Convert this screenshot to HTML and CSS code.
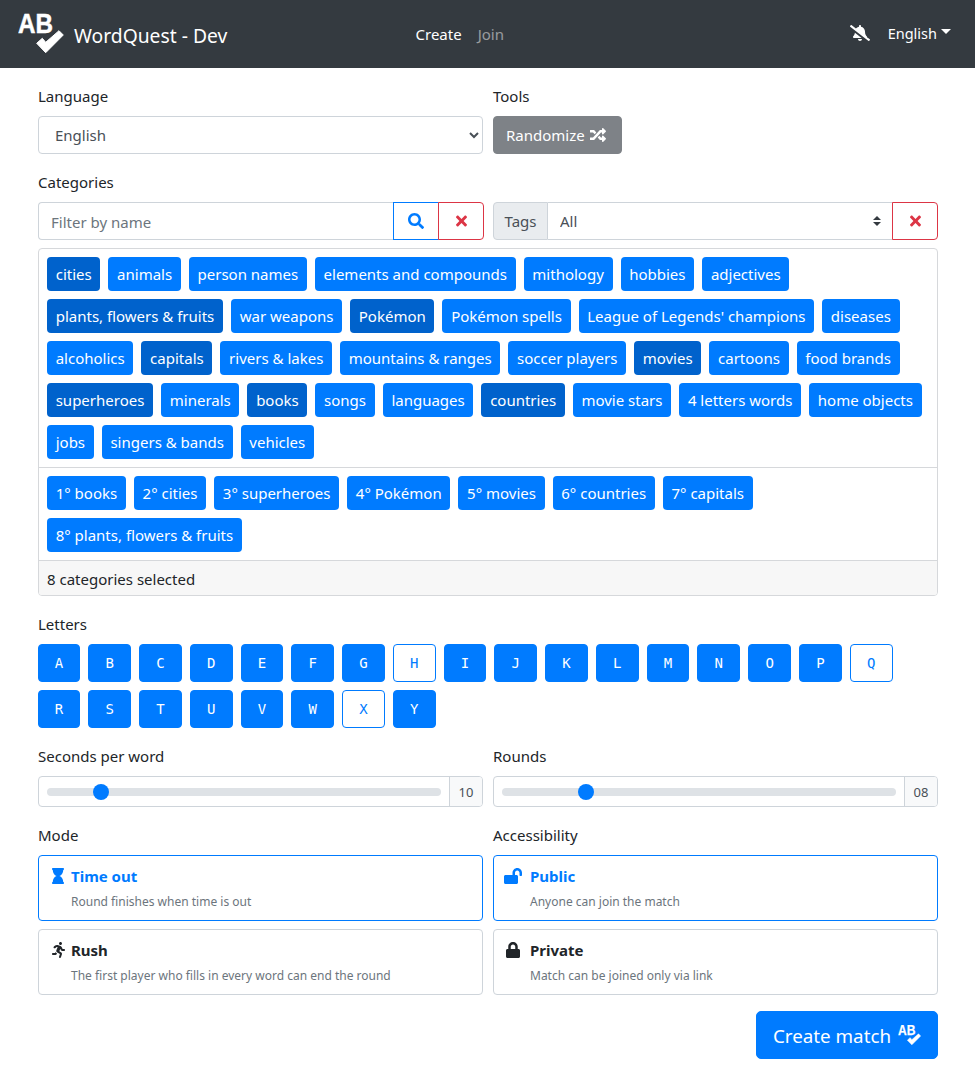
FILE: index.html
```html
<!DOCTYPE html>
<html lang="en">
<head>
<meta charset="utf-8">
<title>WordQuest - Dev</title>
<link rel="stylesheet" href="styles.css">
</head>
<body>
<nav class="navbar">
  <a class="brand">
    <svg class="logo" viewBox="0 -10 46 62" width="46" height="62"><text x="0" y="20" class="logo-text" textLength="35" lengthAdjust="spacingAndGlyphs">AB</text><path d="M18.7 30.3l5.6-5 3.4 4L41 17.7l4.3 4.3-17.6 17.7z" fill="#fff" stroke="#fff" stroke-linejoin="round"/></svg>
    <span class="brand-name">WordQuest - Dev</span>
  </a>
  <div class="nav-center"><a class="nav-link active">Create</a><a class="nav-link muted">Join</a></div>
  <div class="nav-right">
    <svg class="bell" viewBox="0 0 640 512" width="20" height="16"><path fill="#fff" d="M633.82 458.1l-90.62-70.05c.19-1.38.8-2.66.8-4.06.05-7.55-2.61-15.27-8.61-21.71-19.32-20.76-55.47-51.99-55.47-154.29 0-77.7-54.48-139.9-127.94-155.16V32c0-17.67-14.32-32-31.98-32s-31.98 14.33-31.98 32v20.84c-40.33 8.38-74.66 31.07-97.59 62.57L45.47 3.37C38.49-2.05 28.43-.8 23.01 6.18L3.37 31.45C-2.05 38.42-.8 48.47 6.18 53.9l588.35 454.73c6.98 5.43 17.03 4.17 22.46-2.81l19.64-25.27c5.42-6.97 4.17-17.02-2.81-22.45zM157.23 251.54c-8.61 67.96-36.41 93.33-52.62 110.75-6 6.45-8.66 14.16-8.61 21.71.11 16.4 12.98 32 32.1 32h241.92L157.23 251.54zM320 512c35.32 0 63.97-28.65 63.97-64H256.03c0 35.35 28.65 64 63.97 64z"/></svg>
    <span class="lang">English<i class="caret"></i></span>
  </div>
</nav>
<main class="container">
  <div class="two">
    <div class="field">
      <label class="label">Language</label>
      <select class="lang-select"><option>English</option></select>
    </div>
    <div class="field">
      <label class="label">Tools</label>
      <div><button class="btn-random">Randomize <svg viewBox="0 0 512 512" width="16" height="16"><path fill="#fff" d="M504.971 359.029c9.373 9.373 9.373 24.569 0 33.941l-80 79.984c-15.01 15.01-40.971 4.49-40.971-16.971V416h-58.785a12.004 12.004 0 0 1-8.773-3.812l-70.556-75.596 53.333-57.143L352 336h32v-39.981c0-21.438 25.943-31.998 40.971-16.971l80 79.981zM12 176h84l52.781 56.551 53.333-57.143-70.556-75.596A11.999 11.999 0 0 0 122.785 96H12c-6.627 0-12 5.373-12 12v56c0 6.627 5.373 12 12 12zm372 0v39.984c0 21.46 25.961 31.98 40.971 16.971l80-79.984c9.373-9.373 9.373-24.569 0-33.941l-80-79.981C409.943 24.021 384 34.582 384 56.019V96h-58.785a12.004 12.004 0 0 0-8.773 3.812L96 336H12c-6.627 0-12 5.373-12 12v56c0 6.627 5.373 12 12 12h110.785c3.326 0 6.503-1.381 8.773-3.812L352 176h32z"/></svg></button></div>
    </div>
  </div>

  <label class="label cat-label">Categories</label>
  <div class="two">
    <div class="group group-filter">
      <input class="filter" placeholder="Filter by name">
      <button class="icon-btn blue"><svg viewBox="0 0 512 512" width="16" height="16"><path fill="#007bff" d="M505 442.7L405.3 343c-4.5-4.5-10.6-7-17-7H372c27.6-35.3 44-79.7 44-128C416 93.1 322.9 0 208 0S0 93.1 0 208s93.1 208 208 208c48.3 0 92.7-16.4 128-44v16.3c0 6.4 2.5 12.5 7 17l99.7 99.7c9.4 9.4 24.6 9.4 33.9 0l28.3-28.3c9.4-9.4 9.4-24.6.1-34zM208 336c-70.7 0-128-57.2-128-128 0-70.7 57.2-128 128-128 70.7 0 128 57.2 128 128 0 70.7-57.2 128-128 128z"/></svg></button>
      <button class="icon-btn red end"><svg viewBox="0 0 352 512" width="11" height="16"><path fill="#dc3545" d="M242.72 256l100.07-100.07c12.28-12.28 12.28-32.19 0-44.48l-22.24-22.24c-12.28-12.28-32.19-12.28-44.48 0L176 189.28 75.93 89.21c-12.28-12.28-32.19-12.28-44.48 0L9.21 111.45c-12.28 12.28-12.28 32.19 0 44.48L109.28 256 9.21 356.07c-12.28 12.28-12.28 32.19 0 44.48l22.24 22.24c12.28 12.28 32.2 12.28 44.48 0L176 322.72l100.07 100.07c12.28 12.28 32.2 12.28 44.48 0l22.24-22.24c12.28-12.28 12.28-32.19 0-44.48L242.72 256z"/></svg></button>
    </div>
    <div class="group">
      <span class="addon">Tags</span>
      <select class="tags-select"><option>All</option></select>
      <button class="icon-btn red end"><svg viewBox="0 0 352 512" width="11" height="16"><path fill="#dc3545" d="M242.72 256l100.07-100.07c12.28-12.28 12.28-32.19 0-44.48l-22.24-22.24c-12.28-12.28-32.19-12.28-44.48 0L176 189.28 75.93 89.21c-12.28-12.28-32.19-12.28-44.48 0L9.21 111.45c-12.28 12.28-12.28 32.19 0 44.48L109.28 256 9.21 356.07c-12.28 12.28-12.28 32.19 0 44.48l22.24 22.24c12.28 12.28 32.2 12.28 44.48 0L176 322.72l100.07 100.07c12.28 12.28 32.2 12.28 44.48 0l22.24-22.24c12.28-12.28 12.28-32.19 0-44.48L242.72 256z"/></svg></button>
    </div>
  </div>

  <section class="card">
    <div class="chips">
      <span class="chip on">cities</span><span class="chip">animals</span><span class="chip">person names</span><span class="chip">elements and compounds</span><span class="chip">mithology</span><span class="chip">hobbies</span><span class="chip">adjectives</span>
      <span class="chip on">plants, flowers &amp; fruits</span><span class="chip">war weapons</span><span class="chip on">Pokémon</span><span class="chip">Pokémon spells</span><span class="chip">League of Legends' champions</span><span class="chip">diseases</span>
      <span class="chip">alcoholics</span><span class="chip on">capitals</span><span class="chip">rivers &amp; lakes</span><span class="chip">mountains &amp; ranges</span><span class="chip">soccer players</span><span class="chip on">movies</span><span class="chip">cartoons</span><span class="chip">food brands</span>
      <span class="chip on">superheroes</span><span class="chip">minerals</span><span class="chip on">books</span><span class="chip">songs</span><span class="chip">languages</span><span class="chip on">countries</span><span class="chip">movie stars</span><span class="chip">4 letters words</span><span class="chip">home objects</span>
      <span class="chip">jobs</span><span class="chip">singers &amp; bands</span><span class="chip">vehicles</span>
    </div>
    <div class="chips picked">
      <span class="chip">1° books</span><span class="chip">2° cities</span><span class="chip">3° superheroes</span><span class="chip">4° Pokémon</span><span class="chip">5° movies</span><span class="chip">6° countries</span><span class="chip">7° capitals</span><span class="chip">8° plants, flowers &amp; fruits</span>
    </div>
    <div class="card-foot">8 categories selected</div>
  </section>

  <label class="label letters-label">Letters</label>
  <div class="letters">
    <button class="letter">A</button><button class="letter">B</button><button class="letter">C</button><button class="letter">D</button><button class="letter">E</button><button class="letter">F</button><button class="letter">G</button><button class="letter off">H</button><button class="letter">I</button><button class="letter">J</button><button class="letter">K</button><button class="letter">L</button><button class="letter">M</button><button class="letter">N</button><button class="letter">O</button><button class="letter">P</button><button class="letter off">Q</button><button class="letter">R</button><button class="letter">S</button><button class="letter">T</button><button class="letter">U</button><button class="letter">V</button><button class="letter">W</button><button class="letter off">X</button><button class="letter">Y</button>
  </div>

  <div class="two ranges">
    <div class="field">
      <label class="label">Seconds per word</label>
      <div class="range-group"><input type="range" class="range" min="5" max="46" value="10"><span class="range-val">10</span></div>
    </div>
    <div class="field">
      <label class="label">Rounds</label>
      <div class="range-group"><input type="range" class="range" min="1" max="36" value="8"><span class="range-val">08</span></div>
    </div>
  </div>

  <div class="two modes">
    <div class="field">
      <label class="label">Mode</label>
      <div class="option active">
        <div class="opt-title"><span class="opt-icon"><svg viewBox="0 0 384 512" width="12" height="16"><path fill="#007bff" d="M360 64c13.255 0 24-10.745 24-24V24c0-13.255-10.745-24-24-24H24C10.745 0 0 10.745 0 24v16c0 13.255 10.745 24 24 24 0 90.965 51.016 167.734 120.842 192C75.016 280.266 24 357.035 24 448c-13.255 0-24 10.745-24 24v16c0 13.255 10.745 24 24 24h336c13.255 0 24-10.745 24-24v-16c0-13.255-10.745-24-24-24 0-90.965-51.016-167.734-120.842-192C308.984 231.734 360 154.965 360 64z"/></svg></span>Time out</div>
        <div class="opt-desc">Round finishes when time is out</div>
      </div>
      <div class="option">
        <div class="opt-title"><span class="opt-icon"><svg viewBox="0 0 416 512" width="13" height="16"><path fill="#212529" d="M272 96c26.51 0 48-21.49 48-48S298.51 0 272 0s-48 21.49-48 48 21.49 48 48 48zM113.69 317.47l-14.8 34.52H32c-17.67 0-32 14.33-32 32s14.33 32 32 32h77.45c19.25 0 36.58-11.44 44.11-29.09l8.79-20.52-10.67-6.3c-17.32-10.23-30.06-25.37-37.99-42.61zM384 223.99h-44.03l-26.06-53.25c-12.5-25.55-35.45-44.23-61.78-50.94l-71.08-21.14c-28.3-6.8-57.77-.55-80.84 17.14l-39.67 30.41c-14.03 10.75-16.69 30.83-5.92 44.86s30.84 16.66 44.86 5.92l39.69-30.41c7.67-5.89 17.44-8 25.27-6.14l14.7 4.37-37.46 87.39c-12.62 29.48-1.31 64.01 26.3 80.31l84.98 50.17-27.47 87.73c-5.28 16.86 4.11 34.81 20.97 40.09 3.19 1 6.41 1.48 9.58 1.48 13.61 0 26.23-8.77 30.52-22.45l31.64-101.06c5.91-20.77-2.89-43.08-21.64-54.39l-61.24-36.14 31.31-78.28 20.27 41.43c8 16.34 24.92 26.89 43.11 26.89H384c17.67 0 32-14.33 32-32s-14.33-31.99-32-31.99z"/></svg></span>Rush</div>
        <div class="opt-desc">The first player who fills in every word can end the round</div>
      </div>
    </div>
    <div class="field wide-icons">
      <label class="label">Accessibility</label>
      <div class="option active">
        <div class="opt-title"><span class="opt-icon"><svg class="unlock" viewBox="0 0 576 512" width="18" height="16"><path fill="#007bff" d="M423.5 0C339.5.3 272 69.5 272 153.5V224H48c-26.5 0-48 21.5-48 48v192c0 26.5 21.5 48 48 48h352c26.5 0 48-21.5 48-48V272c0-26.5-21.5-48-48-48h-48v-71.1c0-39.6 31.7-72.5 71.3-72.9 40-.4 72.7 32.1 72.7 72v80c0 13.3 10.7 24 24 24h32c13.3 0 24-10.7 24-24v-80C576 68 507.5-.3 423.5 0z"/></svg></span>Public</div>
        <div class="opt-desc">Anyone can join the match</div>
      </div>
      <div class="option">
        <div class="opt-title"><span class="opt-icon"><svg viewBox="0 0 448 512" width="14" height="16"><path fill="#212529" d="M400 224h-24v-72C376 68.2 307.8 0 224 0S72 68.2 72 152v72H48c-26.5 0-48 21.5-48 48v192c0 26.5 21.5 48 48 48h352c26.5 0 48-21.5 48-48V272c0-26.5-21.5-48-48-48zm-104 0H152v-72c0-39.7 32.3-72 72-72s72 32.3 72 72v72z"/></svg></span>Private</div>
        <div class="opt-desc">Match can be joined only via link</div>
      </div>
    </div>
  </div>

  <div class="actions">
    <button class="btn-create"><span class="create-text">Create match</span><svg class="mini-logo" viewBox="0 -10 46 62" width="23" height="31"><text x="0" y="20" class="logo-text" textLength="35" lengthAdjust="spacingAndGlyphs">AB</text><path d="M18.7 30.3l5.6-5 3.4 4L41 17.7l4.3 4.3-17.6 17.7z" fill="#fff" stroke="#fff" stroke-linejoin="round"/></svg></button>
  </div>
</main>
</body>
</html>
```

FILE: styles.css
```css
* { box-sizing: border-box; }
html, body { margin: 0; padding: 0; }
body {
  font-family: "Noto Sans", "Open Sans", "Liberation Sans", sans-serif;
  font-size: 15px;
  line-height: 24px;
  color: #212529;
  background: #fff;
  overflow: hidden;
}
button, input, select { font: inherit; }

.navbar {
  height: 68px;
  background: #343a40;
  display: flex;
  align-items: center;
  padding: 0 24px 0 18px;
  position: relative;
}
.brand { display: flex; align-items: center; color: #fff; }
.logo { display: block; margin-right: 10px; }
.logo-text { font-family: "Liberation Sans", sans-serif; font-weight: 700; font-size: 28px; fill: #fff; stroke: #fff; stroke-width: 0.5px; }
.brand-name { font-size: 19.3px; margin-top: 3px; }
.nav-center { position: absolute; left: 415.5px; top: 22px; display: flex; gap: 16px; font-size: 15px; }
.nav-link.active { color: #fff; }
.nav-link.muted { color: rgba(255,255,255,.5); }
.nav-right { margin-left: auto; display: flex; align-items: center; gap: 18px; color: #fff; margin-top: -3px; }
.bell { display: block; }
.lang { display: flex; align-items: center; font-size: 14.5px; }
.caret { display: block; margin-left: 4px; margin-top: -3px; border-top: 5px solid #fff; border-left: 5px solid transparent; border-right: 5px solid transparent; }

.container { padding: 0 37px 0 38px; }
.two { display: grid; grid-template-columns: 445px 445px; column-gap: 10px; }
.field { display: flex; flex-direction: column; min-width: 0; }
.label { display: block; height: 24px; margin-bottom: 8px; }
.container > .two:first-child { padding-top: 16px; }

.lang-select {
  height: 38px; width: 100%;
  border: 1px solid #ced4da; border-radius: 4px;
  padding: 0 8px 0 12px; color: #495057; background: #fff;
}
.btn-random {
  height: 38px; padding: 0 15px 0 12px;
  background: #7e8287; border: 1px solid #7e8287; border-radius: 4px; color: #fff;
  display: inline-flex; align-items: center; gap: 5px;
}
.cat-label { margin-top: 16px; }

.group { display: flex; height: 38px; }
.group-filter { margin-right: -1px; }
.filter {
  flex: 1; min-width: 0; padding: 2px 12px 0;
  border: 1px solid #ced4da; border-right: 0; border-radius: 4px 0 0 4px; color: #495057; outline: none;
}
.filter::placeholder { color: #6c757d; opacity: 1; }
.icon-btn {
  width: 46px; height: 38px; padding: 0; background: #fff;
  display: flex; align-items: center; justify-content: center;
  border: 1px solid;
}
.icon-btn.blue { border-color: #007bff; }
.icon-btn.red { border-color: #dc3545; margin-left: -1px; }
.icon-btn.end { border-radius: 0 4px 4px 0; }
.addon {
  width: 55px; display: flex; align-items: center; justify-content: center;
  background: #e9ecef; color: #495057;
  border: 1px solid #ced4da; border-radius: 4px 0 0 4px;
}
.tags-select {
  flex: 1; min-width: 0; appearance: none; -webkit-appearance: none;
  border: 1px solid #ced4da; border-left: 0; border-right: 0; padding: 0 12px; color: #495057;
  background: #fff url("data:image/svg+xml,%3csvg xmlns='http://www.w3.org/2000/svg' width='8' height='10' viewBox='0 0 4 5'%3e%3cpath fill='%23343a40' d='M2 0L0 2h4zm0 5L0 3h4z'/%3e%3c/svg%3e") no-repeat right 12px center;
}

.card {
  margin-top: 8px; width: 900px;
  border: 1px solid #d6d8db; border-radius: 4px; overflow: hidden;
}
.chips { display: flex; flex-wrap: wrap; gap: 8px; padding: 8px; }
.picked { border-top: 1px solid #d6d8db; }
.chip {
  height: 34px; padding: 0 8.7px; line-height: 35px;
  background: #007bff; color: #fff; border-radius: 4px; white-space: nowrap;
}
.chip.on { background: #0062cc; }
.card-foot {
  height: 35px; padding: 6px 8px; background: #f7f7f7; border-top: 1px solid #d6d8db;
}

.letters-label { margin-top: 16px; margin-bottom: 8px; }
.letters { display: flex; flex-wrap: wrap; gap: 8px; margin-left: -0.5px; }
.letter {
  width: 42.78px; height: 38px; padding: 0;
  font-family: "DejaVu Sans Mono", "Liberation Mono", monospace; font-size: 14px; font-weight: 400;
  color: #fff; background: #007bff; border: 1px solid #007bff; border-radius: 4px;
}
.letter.off { background: #fff; color: #007bff; }

.ranges { margin-top: 16px; }
.range-group {
  height: 31px; display: flex; align-items: center;
  border: 1px solid #ced4da; border-radius: 4px; overflow: hidden;
}
.range {
  flex: 1; min-width: 0; margin: 0 8px; height: 16px; appearance: none; -webkit-appearance: none; background: transparent;
}
.range::-webkit-slider-runnable-track { height: 8px; background: #dee2e6; border-radius: 8px; }
.range::-webkit-slider-thumb {
  -webkit-appearance: none; width: 16px; height: 16px; margin-top: -4px; border-radius: 50%; background: #007bff; border: 0;
}
.range-val {
  width: 33px; height: 100%; display: flex; align-items: center; justify-content: center;
  background: #f8f9fa; border-left: 1px solid #ced4da; font-size: 13px; color: #495057;
}

.modes { margin-top: 16px; }
.option {
  height: 66px; border: 1px solid #ced4da; border-radius: 4px; padding: 8px 12px;
  margin-bottom: 8px;
}
.option.active { border-color: #007bff; }
.opt-title { display: flex; align-items: center; font-weight: 700; height: 24px; }
.option.active .opt-title { color: #007bff; }
.opt-icon { width: 19px; margin-left: 1px; flex: none; display: flex; align-items: center; }
.opt-desc { font-size: 12px; color: #6c757d; margin-left: 20px; margin-top: 2px; line-height: 24px; }
.wide-icons .opt-icon { width: 24px; margin-left: 0; }
.wide-icons .opt-desc { margin-left: 24px; }
.unlock { margin-left: -2px; flex: none; }

.actions { display: flex; justify-content: flex-end; margin-top: 8px; width: 900px; }
.btn-create {
  height: 48px; width: 182px; background: #007bff; color: #fff; border: 1px solid #007bff; border-radius: 5px;
  font-size: 18.8px; display: flex; align-items: center; justify-content: center; gap: 7px;
}
.create-text { padding-top: 2px; }
.mini-logo { display: block; }
```
